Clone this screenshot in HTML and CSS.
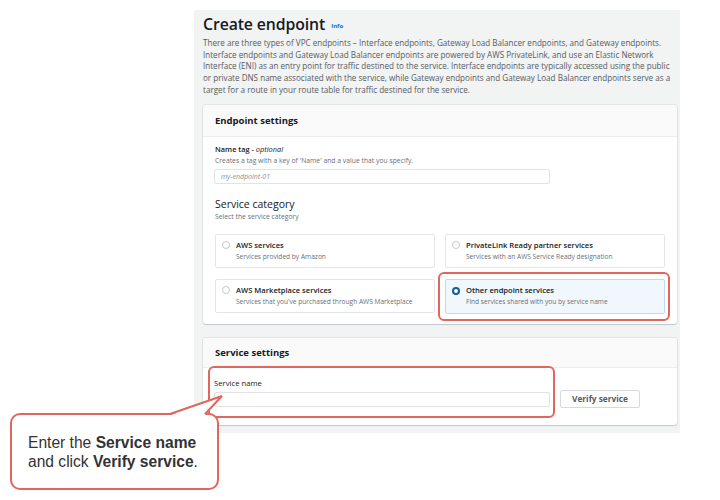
FILE: index.html
```html
<!DOCTYPE html>
<html>
<head>
<meta charset="utf-8">
<link rel="stylesheet" href="styles.css">
</head>
<body>
<div class="panel">
  <h1 class="title">Create endpoint <span class="info">Info</span></h1>
  <p class="intro">There are three types of VPC endpoints – Interface endpoints, Gateway Load Balancer endpoints, and Gateway endpoints.<br>Interface endpoints and Gateway Load Balancer endpoints are powered by AWS PrivateLink, and use an Elastic Network<br>Interface (ENI) as an entry point for traffic destined to the service. Interface endpoints are typically accessed using the public<br>or private DNS name associated with the service, while Gateway endpoints and Gateway Load Balancer endpoints serve as a<br>target for a route in your route table for traffic destined for the service.</p>

  <section class="card card-endpoint">
    <div class="card-header">Endpoint settings</div>
    <div class="card-body">
      <div class="label">Name tag - <i>optional</i></div>
      <div class="hint">Creates a tag with a key of 'Name' and a value that you specify.</div>
      <div class="input input-name"><span class="placeholder">my-endpoint-01</span></div>

      <h2 class="subhead">Service category</h2>
      <div class="hint hint-sub">Select the service category</div>

      <div class="tiles">
        <div class="tile">
          <span class="radio"></span>
          <div class="tile-title">AWS services</div>
          <div class="tile-desc">Services provided by Amazon</div>
        </div>
        <div class="tile">
          <span class="radio"></span>
          <div class="tile-title">PrivateLink Ready partner services</div>
          <div class="tile-desc">Services with an AWS Service Ready designation</div>
        </div>
        <div class="tile">
          <span class="radio"></span>
          <div class="tile-title">AWS Marketplace services</div>
          <div class="tile-desc">Services that you've purchased through AWS Marketplace</div>
        </div>
        <div class="tile tile-selected">
          <span class="radio radio-on"></span>
          <div class="tile-title">Other endpoint services</div>
          <div class="tile-desc">Find services shared with you by service name</div>
          <span class="mark mark-tile"></span>
        </div>
      </div>
    </div>
  </section>

  <section class="card card-service">
    <div class="card-header">Service settings</div>
    <div class="card-body service-body">
      <div class="service-field">
        <div class="label label-plain">Service name</div>
        <div class="input input-service"></div>
        <span class="mark mark-field"></span>
      </div>
      <button class="btn">Verify service</button>
    </div>
  </section>
</div>

<div class="callout">
  <p>Enter the <b>Service name</b><br>and click <b>Verify service</b>.</p>
</div>
<svg class="tail" width="60" height="24" viewBox="0 0 60 24">
  <polygon points="6,22 58,3 40,22" fill="#ffffff"/>
  <polyline points="5,21 57,3 40,21" fill="none" stroke="#e0675d" stroke-width="2" stroke-linejoin="miter"/>
</svg>
</body>
</html>
```

FILE: styles.css
```css
html, body {
  margin: 0;
  padding: 0;
  background: #ffffff;
}
body {
  width: 720px;
  height: 500px;
  position: relative;
  overflow: hidden;
  font-family: "Open Sans", "Noto Sans", sans-serif;
  color: #16191f;
}
.panel {
  margin: 10px 0 0 194px;
  width: 486px;
  height: 423px;
  box-sizing: border-box;
  background: #f2f3f3;
  padding: 4px 3px 0 9px;
}
.title {
  margin: 0;
  font-size: 15.8px;
  line-height: 20px;
  font-weight: 600;
  color: #16191f;
  letter-spacing: -0.1px;
}
.info {
  font-size: 6px;
  font-weight: 700;
  color: #0972d3;
  vertical-align: middle;
  margin-left: 2px;
  letter-spacing: 0;
}
.intro {
  margin: 1px 0 0 0;
  font-size: 8.1px;
  line-height: 11.75px;
  color: #545b64;
  white-space: nowrap;
}
.card {
  background: #ffffff;
  border-radius: 3px;
  box-shadow: 0 1px 1px rgba(0, 31, 63, 0.15), 0 0 0 1px rgba(0, 28, 36, 0.06);
  width: 474px;
}
.card-endpoint {
  margin-top: 9px;
  height: 219px;
}
.card-service {
  margin-top: 14px;
  height: 87px;
}
.card-header {
  height: 32px;
  box-sizing: border-box;
  padding: 0 12px;
  display: flex;
  align-items: center;
  font-size: 9.5px;
  font-weight: 700;
  background: #fafafa;
  border-bottom: 1px solid #eaeded;
  border-radius: 3px 3px 0 0;
}
.card-service .card-header {
  height: 30px;
}
.card-body {
  padding: 7px 12px 0 12px;
}
.label {
  font-size: 7.4px;
  line-height: 10px;
  font-weight: 600;
  color: #16191f;
}
.label i {
  font-weight: 400;
}
.label-plain {
  font-weight: 400;
  font-size: 7.7px;
}
.hint {
  font-size: 6.8px;
  line-height: 10px;
  color: #687078;
  margin-top: 2px;
}
.input {
  box-sizing: border-box;
  height: 15px;
  border: 1px solid #e1e4e6;
  border-radius: 2px;
  background: #fff;
  margin-top: 3px;
}
.input-name {
  width: 336px;
  margin-left: -1px;
  padding-left: 6px;
  display: flex;
  align-items: center;
}
.placeholder {
  font-size: 7px;
  font-style: italic;
  color: #879196;
}
.subhead {
  margin: 13px 0 0 0;
  font-size: 10.5px;
  line-height: 14px;
  font-weight: 500;
  color: #16191f;
}
.hint-sub {
  margin-top: 1px;
}
.tiles {
  margin-top: 12px;
  display: grid;
  grid-template-columns: 220px 220px;
  column-gap: 10px;
  row-gap: 11px;
}
.tile {
  position: relative;
  height: 34px;
  box-sizing: border-box;
  border: 1px solid #e4e7e9;
  border-radius: 2px;
  background: #fff;
  display: grid;
  grid-template-columns: 14px 1fr;
  align-content: center;
  padding-left: 6px;
}
.tile-selected {
  background: #f0f8fd;
  border-color: #bcdcef;
  height: 35px;
}
.radio {
  grid-column: 1;
  grid-row: 1;
  align-self: center;
  width: 6px;
  height: 6px;
  border: 1px solid #c3cacc;
  border-radius: 50%;
}
.radio-on {
  border: 2px solid #0f5f95;
  width: 4px;
  height: 4px;
  background: #fff;
}
.tile-title {
  grid-column: 2;
  grid-row: 1;
  font-size: 7.6px;
  line-height: 11px;
  font-weight: 600;
  color: #16191f;
}
.tile-desc {
  grid-column: 2;
  grid-row: 2;
  font-size: 6.6px;
  line-height: 11px;
  color: #687078;
}
.mark {
  position: absolute;
  border: 2px solid #e0675d;
  border-radius: 6px;
  pointer-events: none;
}
.mark-tile {
  left: -8px;
  right: -6px;
  top: -8px;
  bottom: -8px;
}
.service-body {
  display: flex;
  align-items: flex-end;
  padding-top: 10px;
}
.service-field {
  position: relative;
  width: 334px;
  margin-left: -1px;
}
.input-service {
  width: 336px;
  margin-top: 4px;
}
.mark-field {
  left: -6px;
  right: -7px;
  top: -12px;
  bottom: -11px;
}
.btn {
  margin-left: 12px;
  margin-bottom: -1px;
  width: 80px;
  height: 18px;
  box-sizing: border-box;
  border: 1px solid #d5dbdb;
  border-radius: 2px;
  background: #fff;
  font-family: "Open Sans", "Noto Sans", sans-serif;
  font-size: 8.3px;
  font-weight: 700;
  color: #545b64;
  padding: 0;
}
.callout {
  position: absolute;
  left: 10px;
  top: 413px;
  width: 209px;
  height: 77px;
  box-sizing: border-box;
  border: 2px solid #e0675d;
  border-radius: 10px;
  background: #fff;
  display: flex;
  align-items: center;
  padding-left: 16px;
}
.callout p {
  margin: 0;
  font-family: "Liberation Sans", Arial, sans-serif;
  font-size: 15.6px;
  line-height: 19px;
  color: #333333;
}
.tail {
  position: absolute;
  left: 165px;
  top: 393px;
}
```
